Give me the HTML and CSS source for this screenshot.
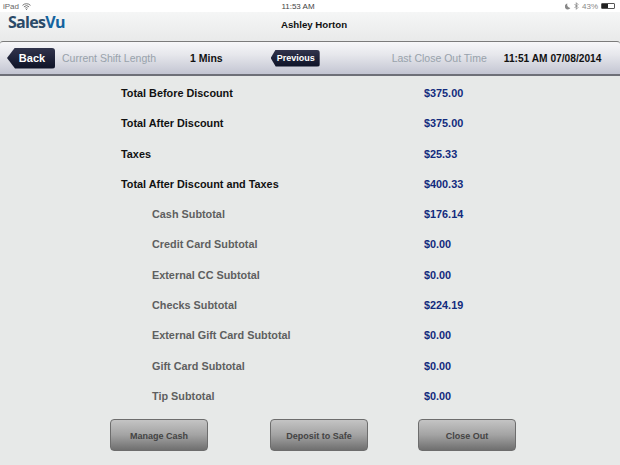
FILE: index.html
```html
<!DOCTYPE html>
<html lang="en">
<head>
<meta charset="utf-8">
<title>SalesVu</title>
<link rel="stylesheet" href="styles.css">
</head>
<body>
<div class="status">
  <div class="status-left"><span>iPad</span>
    <svg class="wifi" width="9" height="7" viewBox="0 0 9 7"><path d="M.5 2.4a5.6 5.6 0 0 1 8 0M1.9 3.9a3.6 3.6 0 0 1 5.2 0M3.3 5.2a1.7 1.700 0 0 1 2.4 0" fill="none" stroke="#666" stroke-width=".9"/><circle cx="4.5" cy="6.3" r=".6" fill="#666"/></svg>
  </div>
  <div class="status-time">11:53 AM</div>
  <div class="status-right">
    <svg width="6" height="7" viewBox="0 0 6 7"><path d="M2.4.5a3 3 0 1 0 3 4.500A3.4 3.4 0 0 1 2.400.5z" fill="#888"/></svg>
    <svg width="5" height="8" viewBox="0 0 5 8"><path d="M.5 2l3.500 3.500L2.300 7.300V.7L4 2.500.5 6" fill="none" stroke="#777" stroke-width=".7"/></svg>
    <span>43%</span>
    <span class="battery"><span class="battery-fill"></span></span>
  </div>
</div>
<header class="brand-bar">
  <div class="logo">Sales<span class="logo-vu">Vu</span></div>
  <div class="user">Ashley Horton</div>
</header>
<nav class="shift-bar">
  <a class="back">Back</a>
  <span class="label label-shift">Current Shift Length</span>
  <span class="value value-mins">1 Mins</span>
  <a class="previous">Previous</a>
  <span class="label label-close">Last Close Out Time</span>
  <span class="value value-time">11:51 AM 07/08/2014</span>
</nav>
<main class="report">
  <div class="row"><span>Total Before Discount</span><span class="amt">$375.00</span></div>
  <div class="row"><span>Total After Discount</span><span class="amt">$375.00</span></div>
  <div class="row"><span>Taxes</span><span class="amt">$25.33</span></div>
  <div class="row"><span>Total After Discount and Taxes</span><span class="amt">$400.33</span></div>
  <div class="row sub"><span>Cash Subtotal</span><span class="amt">$176.14</span></div>
  <div class="row sub"><span>Credit Card Subtotal</span><span class="amt">$0.00</span></div>
  <div class="row sub"><span>External CC Subtotal</span><span class="amt">$0.00</span></div>
  <div class="row sub"><span>Checks Subtotal</span><span class="amt">$224.19</span></div>
  <div class="row sub"><span>External Gift Card Subtotal</span><span class="amt">$0.00</span></div>
  <div class="row sub"><span>Gift Card Subtotal</span><span class="amt">$0.00</span></div>
  <div class="row sub"><span>Tip Subtotal</span><span class="amt">$0.00</span></div>
</main>
<footer class="actions">
  <button class="btn">Manage Cash</button>
  <button class="btn">Deposit to Safe</button>
  <button class="btn">Close Out</button>
</footer>
</body>
</html>
```
FILE: styles.css
```css
* { box-sizing: border-box; }
html, body { margin: 0; padding: 0; }
body {
  width: 620px; height: 465px; overflow: hidden;
  background: #e7e9e8;
  font-family: "Liberation Sans", Arial, sans-serif;
  display: flex; flex-direction: column;
}
.status {
  height: 12px; background: #fff; color: #666; font-size: 8px;
  display: flex; align-items: center; justify-content: space-between;
  padding: 0 5px 0 3px; flex: none;
}
.status-left, .status-right { display: flex; align-items: center; gap: 2px; }
.status-left { gap: 3px; }
.status-time { color: #444; }
.status-right { color: #888; gap: 3px; }
.battery { width: 14px; height: 6px; border: 1px solid #555; display: block; border-radius: 1px; }
.battery-fill { display: block; width: 6px; height: 4px; background: #222; }
.brand-bar {
  height: 29px; flex: none; padding: 0 0 0 8px;
  background: linear-gradient(#f5f6f6, #e9eaea);
  display: grid; grid-template-columns: 1fr auto 1fr; align-items: center;
}
.logo { font-family: "Open Sans", sans-serif; font-size: 16px; line-height: 20px; font-weight: bold; color: #2b4a68; letter-spacing: -.7px; margin-top: -9px; }
.logo-vu { color: #14639f; }
.user { font-size: 9.700px; font-weight: bold; color: #111; grid-column: 2; margin-top: -5px; white-space: nowrap; }
.shift-bar {
  height: 35px; flex: none; white-space: nowrap;
  border-top: 1px solid #7b7b7b; border-bottom: 2px solid #6e7078; border-radius: 3px 3px 0 0;
  background: linear-gradient(#f7f7f9 0, #e6e7ec 40%, #c3c5d2 100%);
  display: flex; align-items: center; padding: 0 0 0 7px;
}
.label { font-size: 10.500px; color: #98a2ab; flex: none; }
.value { font-size: 10.500px; font-weight: bold; color: #111; flex: none; }
.back {
  width: 48px; height: 21px; font-size: 11px; font-weight: bold; color: #fff; flex: none;
  background: linear-gradient(#31344c, #0d1226);
  clip-path: polygon(0 50%, 8px 0, 100% 0, 100% 100%, 8px 100%);
  display: flex; align-items: center; justify-content: center; padding-left: 2px;
  border-radius: 0 3px 3px 0;
}
.label-shift { margin-left: 7px; }
.value-mins { margin-left: 34px; }
.previous {
  width: 49px; height: 17px; font-size: 9px; font-weight: bold; color: #fff; flex: none;
  margin-left: 48px;
  background: linear-gradient(#31344c, #0d1226);
  clip-path: polygon(0 50%, 5px 0, 100% 0, 100% 100%, 5px 100%);
  display: flex; align-items: center; justify-content: center; padding-left: 1px;
  border-radius: 0 3px 3px 0;
}
.label-close { margin-left: 72px; }
.value-time { margin-left: 17px; font-size: 10.200px; }
.report { flex: 1; padding-top: 1.800px; }
.row {
  height: 30.300px; display: grid; grid-template-columns: 303px auto; align-items: center;
  padding-left: 121px; font-size: 10.850px; font-weight: bold; color: #111;
}
.row.sub { color: #5e5f60; padding-left: 152px; grid-template-columns: 272px auto; }
.amt { color: #122b7d; }
.actions {
  flex: none; height: 46px;
  display: flex; align-items: flex-start; padding-left: 110px;
}
.btn {
  width: 98px; height: 32px; padding: 1px 0 0; flex: none;
  border: 1px solid #6d6d6d; border-radius: 4px;
  background: linear-gradient(#c4c4c4, #a3a3a3 50%, #6f6f6f);
  font: bold 9px "Liberation Sans", Arial, sans-serif; color: #444;
}
.btn:nth-child(2) { margin-left: 62px; }
.btn:nth-child(3) { margin-left: 50px; }
```
